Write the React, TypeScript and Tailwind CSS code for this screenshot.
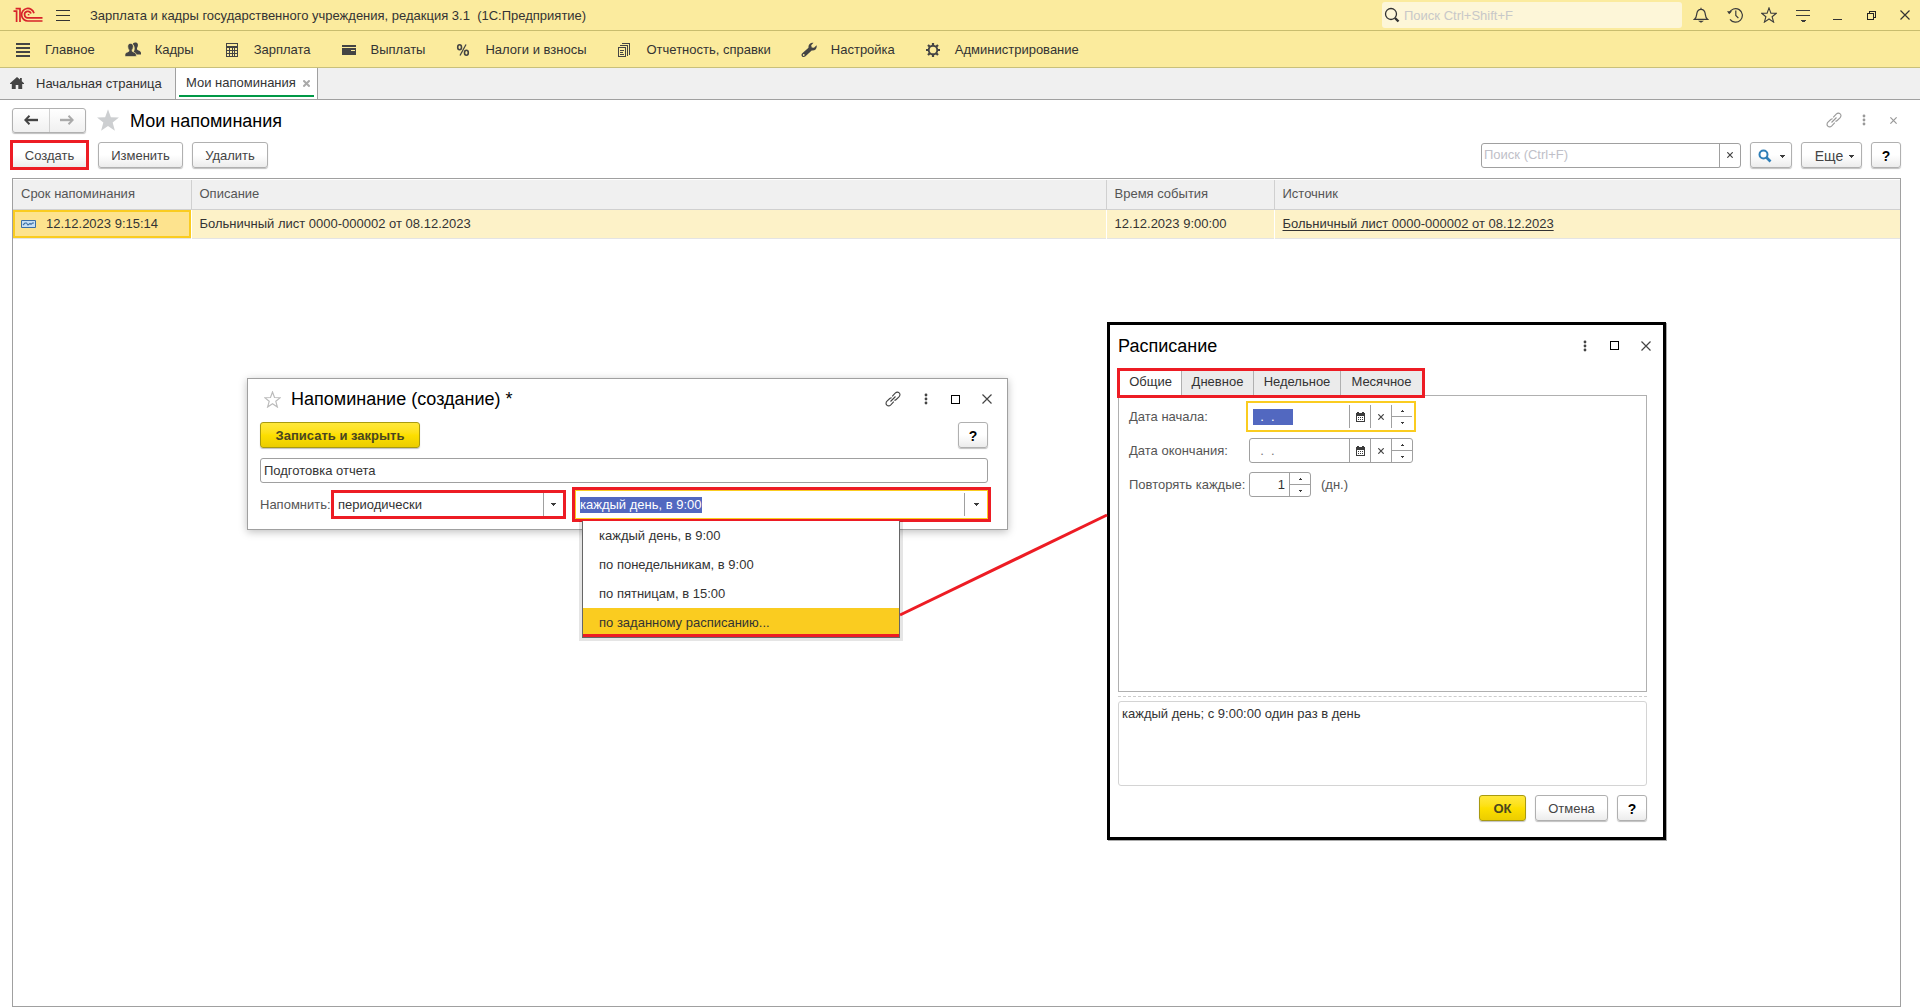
import { useState } from "react";
import type { ReactNode } from "react";
import clsx from "clsx";

const SECTIONS = [
  { label: "Главное", icon: <ListIcon /> },
  { label: "Кадры", icon: <PeopleIcon /> },
  { label: "Зарплата", icon: <CalcIcon /> },
  { label: "Выплаты", icon: <CardIcon /> },
  { label: "Налоги и взносы", icon: <PercentIcon /> },
  { label: "Отчетность, справки", icon: <DocsIcon /> },
  { label: "Настройка", icon: <WrenchIcon /> },
  { label: "Администрирование", icon: <GearIcon /> },
];

const PERIODS = ["каждый день, в 9:00", "по понедельникам, в 9:00", "по пятницам, в 15:00", "по заданному расписанию..."];

const SCHEDULE_TABS = [
  { label: "Общие", width: "w-[62px]" },
  { label: "Дневное", width: "w-[72px]" },
  { label: "Недельное", width: "w-[87px]" },
  { label: "Месячное", width: "w-[81px]" },
];

/* ---------- icons ---------- */

function Logo() {
  return (
    <svg width="30" height="16" viewBox="0 0 30 16" fill="none" stroke="#d8232a" strokeWidth="1.7">
      <path d="M0.5 4.2H3.6V15M2.6 1.6H7V15" />
      <path d="M21 6.2A6.3 6.3 0 1 0 15.2 14H29.5" />
      <path d="M18 6.6A3.3 3.3 0 1 0 15.2 10.9H29.5" />
      <path d="M14.8 7.7h1.6" strokeWidth="1.3" />
    </svg>
  );
}

function ListIcon() {
  return (
    <svg width="16" height="16" viewBox="0 0 16 16" fill="#444" shapeRendering="crispEdges">
      <path d="M1 1h14v2H1zM1 5h14v2H1zM1 9h14v2H1zM1 13h14v2H1z" />
    </svg>
  );
}

function PeopleIcon() {
  return (
    <svg width="16" height="16" viewBox="0 0 16 16" fill="#444">
      <path d="M8.2 1.2C9 .2 12 .1 12.7 1.7c.5 1.2.2 3-.7 4.300v1.500c1 1 4 1.300 4 3.500v1.500h-4.500c-.5-1.300-1.700-1.800-2.900-2.400C10 8 9.900 5 9 3.700 8.600 3 8 2.500 7.700 2.300z" />
      <path d="M2.800 4.500c0-2 1-3.100 2.700-3.100s2.800 1.100 2.800 3.100c0 1.500-.5 2.600-1.200 3.400v1.300c1.200 1 4.200 1.400 4.200 3.600v1.700H0v-1.700c0-2.200 2.800-2.600 4-3.600V7.900c-.7-.8-1.200-1.900-1.200-3.400z" stroke="#fbeb9d" strokeWidth=".6" />
    </svg>
  );
}

function CalcIcon() {
  return (
    <svg width="16" height="16" viewBox="0 0 16 16" fill="#444" fillRule="evenodd" shapeRendering="crispEdges">
      <path d="M2 1h12v14H2zM3 2v2h10V2zM3 6v2h2V6zM6 6v2h2V6zM9 6v2h1V6zM11 6v2h2V6zM3 9v2h2V9zM6 9v2h2V9zM9 9v2h1V9zM11 9v2h2V9zM3 12v2h2v-2zM6 12v2h2v-2zM9 12v2h1v-2zM11 12v2h2v-2z" />
    </svg>
  );
}

function CardIcon() {
  return (
    <svg width="16" height="16" viewBox="0 0 16 16" fill="#444" shapeRendering="crispEdges">
      <path d="M1 3h14v2H1zM1 6h14v7H1z" />
      <path d="M10 8h4v1h-4z" fill="#fbeb9d" />
    </svg>
  );
}

function PercentIcon() {
  return (
    <svg width="16" height="16" viewBox="0 0 16 16" fill="none" stroke="#444" strokeWidth="1.6">
      <ellipse cx="4.600" cy="5.300" rx="1.900" ry="2.500" />
      <ellipse cx="11.400" cy="10.700" rx="1.900" ry="2.500" />
      <path d="M11 2.500 5 13.500" strokeWidth="1.300" />
    </svg>
  );
}

function DocsIcon() {
  return (
    <svg width="16" height="16" viewBox="0 0 16 16" fill="none" stroke="#444" shapeRendering="crispEdges">
      <path d="M1.500 5.500h7v9h-7zM2.500 3.500h8v10M4.500 1.500h8v11" />
      <path d="M3 8.500h4M3 10.500h3M3 12.500h4" />
    </svg>
  );
}

function WrenchIcon() {
  return (
    <svg width="16" height="16" viewBox="0 0 16 16" fill="#444">
      <path d="M15.600 3.300c.7 3-1.600 5.700-4.900 5.100L4.500 14.300c-1 1-2.600 1-3.400.1-.9-.9-.8-2.300.2-3.200l6.200-5.400C7 2.700 9.500.2 12.500.8L10.200 3.200l.5 2.200 2.300.4zM2.700 12.100a.9.9 0 1 0 .1 1.800.9.9 0 0 0-.1-1.800z" />
    </svg>
  );
}

function GearIcon() {
  return (
    <svg width="16" height="16" viewBox="0 0 16 16" fill="none" stroke="#444">
      <circle cx="8" cy="8" r="4.300" strokeWidth="1.900" />
      <path d="M8 1v2.500M8 12.500V15M1 8h2.500M12.500 8H15M3 3l1.800 1.800M11.200 11.200 13 13M13 3l-1.800 1.800M4.800 11.200 3 13" strokeWidth="2.200" />
    </svg>
  );
}

function HomeIcon() {
  return (
    <svg width="14" height="14" viewBox="0 0 14 14" fill="#444">
      <path d="M7 0l3 2.600V1h1.800v3.200L14 6.200v.8h-1.800v5H8.300V8H5.700v4H1.800V7H0v-.8z" />
    </svg>
  );
}

function SearchIcon({ className, stroke }: { className?: string; stroke: number }) {
  return (
    <svg width="16" height="16" viewBox="0 0 16 16" fill="none" stroke="currentColor" strokeWidth={stroke} className={className}>
      <circle cx="7" cy="7" r="5.500" />
      <path d="M11 11 14.500 14.500" strokeWidth="2.400" />
    </svg>
  );
}

function FindIcon() {
  return (
    <svg width="14" height="14" viewBox="0 0 14 14" fill="none" stroke="#2f7fb8">
      <circle cx="5.500" cy="5.500" r="4" strokeWidth="2" />
      <path d="M8.500 8.500 12.500 12.500" strokeWidth="2.600" />
    </svg>
  );
}

function BellIcon() {
  return (
    <svg width="16" height="16" viewBox="0 0 16 16" fill="none" stroke="#3b3b3b" strokeWidth="1.200">
      <path d="M8 .8v1.500M1.500 12.300c2-1.500 2-3.500 2.300-5.700C4.200 3.800 5.700 2.300 8 2.300s3.800 1.500 4.200 4.300c.3 2.200.3 4.200 2.300 5.700z" />
      <path d="M5 13.800h6L8.500 15.500h-1z" fill="#3b3b3b" stroke="none" />
    </svg>
  );
}

function HistoryIcon() {
  return (
    <svg width="16" height="16" viewBox="0 0 16 16" fill="none" stroke="#3b3b3b" strokeWidth="1.200">
      <path d="M2.200 6A6.800 6.800 0 1 1 3 12.300M8.800 3.500V8.500l2.600 2.700" />
      <path d="M0 4.200h5L2.200 7.300z" fill="#3b3b3b" stroke="none" />
    </svg>
  );
}

function StarIcon({ className, size = 16 }: { className: string; size?: number }) {
  return (
    <svg width={size} height={size} viewBox="0 0 16 16" className={className} strokeWidth="1.100">
      <path d="M8 .9l1.900 5.200 5.400.2-4.200 3.400 1.500 5.400L8 12l-4.600 3.100 1.500-5.400L.7 6.300l5.400-.2z" />
    </svg>
  );
}

function SettingsIcon() {
  return (
    <svg width="16" height="16" viewBox="0 0 16 16" fill="#3b3b3b" shapeRendering="crispEdges">
      <path d="M1 3h14v1H1zM1 8h14v1H1zM6 13h5v1H6zM7 14h3v1H7z" />
    </svg>
  );
}

function LinkIcon() {
  return (
    <svg width="16" height="16" viewBox="0 0 16 16" fill="none" stroke="currentColor" strokeWidth="1.100">
      <path d="M7.200 5.400l3-3.200c1.200-1.200 2.900-1.300 4-.3s1 2.700-.2 3.900L11.200 8.500c-.6.6-1.200.8-1.900.8M8.800 10.600l-3 3.200c-1.200 1.200-2.900 1.300-4 .3s-1-2.700.2-3.900L4.800 7.500c.6-.6 1.200-.8 1.900-.8M5.500 10.500l5-5" />
    </svg>
  );
}

function DotsIcon() {
  return (
    <svg width="6" height="12" viewBox="0 0 6 12" fill="currentColor">
      <circle cx="3" cy="2" r="1.400" />
      <circle cx="3" cy="6" r="1.400" />
      <circle cx="3" cy="10" r="1.400" />
    </svg>
  );
}

function SquareIcon() {
  return <span className="block size-[9px] border border-black" />;
}

function CrossIcon({ size, stroke = 1.2 }: { size: number; stroke?: number }) {
  return (
    <svg width={size} height={size} viewBox="0 0 10 10" stroke="currentColor" strokeWidth={stroke}>
      <path d="M.5.5l9 9M9.500.5l-9 9" vectorEffect="non-scaling-stroke" />
    </svg>
  );
}

function Caret() {
  return (
    <svg width="5" height="3" viewBox="0 0 5 3" fill="#3b3b3b" shapeRendering="crispEdges">
      <path d="M0 0h5v1H0zM1 1h3v1H1zM2 2h1v1H2z" />
    </svg>
  );
}

function Arrow({ className }: { className: string }) {
  return (
    <svg width="14" height="10" viewBox="0 0 14 10" fill="none" stroke="currentColor" strokeWidth="2" className={className}>
      <path d="M14 5H2" strokeWidth="2.400" />
      <path d="M5.500.8 1.300 5l4.200 4.200" />
    </svg>
  );
}

function CalendarIcon() {
  return (
    <svg width="9" height="10" viewBox="0 0 9 10" fill="#3b3b3b" fillRule="evenodd" shapeRendering="crispEdges">
      <path d="M0 1h1V0h2v1h3V0h2v1h1v9H0zM1 4v5h7V4z" />
      <path d="M2 5h1v1H2zM4 5h1v1H4zM6 5h1v1H6zM2 7h1v1H2zM4 7h1v1H4zM6 7h1v1H6z" />
    </svg>
  );
}

/* ---------- controls ---------- */

type ButtonProps = { children: ReactNode; className?: string; primary?: boolean; label?: string };

function Button({ children, className, primary, label }: ButtonProps) {
  return (
    <button
      type="button"
      aria-label={label}
      className={clsx(
        "flex h-[26px] shrink-0 items-center justify-center rounded-[3px] border bg-linear-to-b pt-0.5 shadow-[0_1px_1px_rgba(0,0,0,0.25)]",
        primary
          ? "border-[#a89a10] from-[#ffe83a] via-[#fddf00] to-[#ebcd00] font-bold text-[#4a4620]"
          : "border-[#b0b0b0] from-white via-white to-[#ececec] text-[#444]",
        className
      )}
    >
      {children}
    </button>
  );
}

function HelpButton() {
  return (
    <Button className="w-[30px] text-sm font-bold text-black" label="Справка">
      ?
    </Button>
  );
}

function Spinner({ name }: { name: string }) {
  return (
    <span className="flex w-[21px] flex-col border-l border-[#a0a0a0]">
      <button type="button" aria-label={`${name}: больше`} className="flex flex-1 items-center justify-center border-b border-[#a0a0a0]">
        <svg width="3" height="2" viewBox="0 0 3 2" fill="#3b3b3b" shapeRendering="crispEdges">
          <path d="M1 0h1v1h1v1H0V1h1z" />
        </svg>
      </button>
      <button type="button" aria-label={`${name}: меньше`} className="flex flex-1 items-center justify-center">
        <svg width="3" height="2" viewBox="0 0 3 2" fill="#3b3b3b" shapeRendering="crispEdges">
          <path d="M0 0h3v1H2v1H1V1H0z" />
        </svg>
      </button>
    </span>
  );
}

function DateField({ id, name, focused }: { id: string; name: string; focused?: boolean }) {
  return (
    <div
      className={clsx(
        "flex bg-white",
        focused ? "-mx-[3px] h-[31px] border-2 border-[#facc20] px-0.5 py-0.5" : "h-[25px] rounded-[3px] border border-[#a0a0a0]"
      )}
    >
      <span className="flex w-[99px] items-center pl-[3px]">
        <input
          id={id}
          defaultValue="  .  ."
          className={clsx("h-4 w-10 whitespace-pre outline-none", focused ? "bg-[#5268c0] text-white" : "text-[#777]")}
        />
      </span>
      <button type="button" aria-label={`${name}: календарь`} className="flex w-[21px] items-center justify-center border-l border-[#a0a0a0]">
        <CalendarIcon />
      </button>
      <button type="button" aria-label={`${name}: очистить`} className="flex w-[21px] items-center justify-center border-l border-[#a0a0a0] text-[#444]">
        <CrossIcon size={6} />
      </button>
      <Spinner name={name} />
    </div>
  );
}

/* ---------- application frame ---------- */

function TitleBar() {
  return (
    <header className="flex h-[31px] items-center border-b border-[#c9bd6e] bg-[#fbeb9e] pr-[7px] pl-[13px]">
      <Logo />
      <button type="button" aria-label="Меню" className="ml-[13px]">
        <svg width="14" height="11" viewBox="0 0 14 11" fill="#333" shapeRendering="crispEdges">
          <path d="M0 0h14v1H0zM0 5h14v1H0zM0 10h14v1H0z" />
        </svg>
      </button>
      <h1 className="ml-5 pt-0.5 whitespace-pre">Зарплата и кадры государственного учреждения, редакция 3.1  (1С:Предприятие)</h1>
      <label className="ml-auto flex h-[26px] w-[300px] items-center gap-1 rounded-[3px] bg-[#fdf6d8] pl-0.5">
        <SearchIcon className="text-[#333]" stroke={1.3} />
        <input placeholder="Поиск Ctrl+Shift+F" aria-label="Поиск" className="min-w-0 flex-1 pt-0.5 outline-none placeholder:text-[#c8c8c8]" />
      </label>
      <div className="ml-[11px] flex gap-[18px] text-[#333]">
        <button type="button" aria-label="Уведомления"><BellIcon /></button>
        <button type="button" aria-label="История"><HistoryIcon /></button>
        <button type="button" aria-label="Избранное"><StarIcon className="fill-none stroke-[#3b3b3b]" /></button>
        <button type="button" aria-label="Настройки"><SettingsIcon /></button>
        <button type="button" aria-label="Свернуть" className="flex size-4 items-end justify-center pb-[3px]">
          <span className="h-px w-[9px] bg-[#333]" />
        </button>
        <button type="button" aria-label="Восстановить" className="flex size-4 items-center justify-center">
          <svg width="9" height="9" viewBox="0 0 9 9" fill="none" stroke="#222" shapeRendering="crispEdges">
            <path d="M.5 2.500h6v6h-6zM2.500 2V.5h6v6H7" />
          </svg>
        </button>
        <button type="button" aria-label="Закрыть" className="flex size-4 items-center justify-center"><CrossIcon size={10} /></button>
      </div>
    </header>
  );
}

function SectionBar() {
  return (
    <nav className="flex h-[37px] items-center gap-[30px] border-b border-[#c9c07a] bg-[#fbeb9d] pt-px pl-[15px]">
      {SECTIONS.map((s) => (
        <a key={s.label} href="#" className="flex items-center gap-3.5">
          {s.icon}
          {s.label}
        </a>
      ))}
    </nav>
  );
}

function PageTabs() {
  return (
    <div className="flex h-8 border-b border-[#a0a0a0] bg-[#f0f0f0]">
      <button type="button" className="flex w-[175px] items-center gap-3 pl-2.5">
        <HomeIcon />
        Начальная страница
      </button>
      <div className="flex w-[143px] flex-col border-x border-[#a0a0a0] bg-white px-[3px]">
        <div className="flex flex-1 items-center pt-[3px] pl-[7px]">
          <button type="button">Мои напоминания</button>
          <button type="button" aria-label="Закрыть вкладку" className="ml-[7px] text-[#aaa]">
            <CrossIcon size={7} stroke={2} />
          </button>
        </div>
        <div className="mb-0.5 h-0.5 bg-[#009846]" />
      </div>
    </div>
  );
}

function RemindersTable() {
  return (
    <div className="flex-1 border border-[#a0a0a0] py-px">
      <table className="w-full table-fixed border-collapse text-left">
        <colgroup>
          <col className="w-[178px]" />
          <col />
          <col className="w-[168px]" />
          <col className="w-[626px]" />
        </colgroup>
        <thead>
          <tr className="h-[29px] border-b border-[#d0d0d0] bg-[#f0f0f0] text-[#555]">
            <th className="border-r border-[#d0d0d0] pl-2 font-normal">Срок напоминания</th>
            <th className="border-r border-[#d0d0d0] pl-2 font-normal">Описание</th>
            <th className="border-r border-[#d0d0d0] pl-2 font-normal">Время события</th>
            <th className="pl-2 font-normal">Источник</th>
          </tr>
        </thead>
        <tbody>
          <tr className="h-[29px] border-b border-[#e4e4e4] bg-[#fdf2c8]">
            <td className="bg-[#fde38e] p-0">
              <div className="flex h-7 items-center gap-2.5 border-2 border-[#facc20] pl-1.5">
                <svg width="15" height="8" viewBox="0 0 15 8" fill="#c5def3" stroke="#3a6ea5">
                  <path d="M.5.5h14v7H.5z" />
                  <path d="M2 5l2-2h1.500L7 5l2-1.500 1 .8 1.500-1.300H13" fill="none" strokeWidth="1.100" />
                </svg>
                12.12.2023 9:15:14
              </div>
            </td>
            <td className="border-x border-white pl-2">Больничный лист 0000-000002 от 08.12.2023</td>
            <td className="border-x border-white pl-2">12.12.2023 9:00:00</td>
            <td className="pl-2">
              <a href="#" className="underline underline-offset-2">Больничный лист 0000-000002 от 08.12.2023</a>
            </td>
          </tr>
        </tbody>
      </table>
    </div>
  );
}

function RemindersPage() {
  return (
    <main className="flex flex-1 flex-col pr-[19px] pb-px pl-3">
      <div className="mt-2 flex h-6 items-center">
        <div className="flex h-[25px] w-[74px] rounded-[3px] border border-[#b0b0b0] bg-linear-to-b from-white to-[#f0f0f0] shadow-[0_1px_1px_rgba(0,0,0,0.25)]">
          <button type="button" aria-label="Назад" className="flex flex-1 items-center justify-center border-r border-[#d0d0d0]">
            <Arrow className="text-[#444]" />
          </button>
          <button type="button" aria-label="Вперед" className="flex flex-1 items-center justify-center">
            <Arrow className="rotate-180 text-[#aaa]" />
          </button>
        </div>
        <button type="button" aria-label="В избранное" className="ml-2.5">
          <StarIcon size={24} className="fill-[#cdcfd1]" />
        </button>
        <h2 className="ml-2.5 pt-px text-lg text-black">Мои напоминания</h2>
        <div className="mr-1 ml-auto flex items-center gap-[19px] text-[#999]">
          <button type="button" aria-label="Получить ссылку"><LinkIcon /></button>
          <button type="button" aria-label="Дополнительно"><DotsIcon /></button>
          <button type="button" aria-label="Закрыть форму" className="ml-1"><CrossIcon size={7} /></button>
        </div>
      </div>

      <div className="mt-2 mb-2 -ml-0.5 flex h-[30px] items-center gap-[9px]">
        <button type="button" className="h-[30px] w-[79px] border-3 border-[#ed1c24] bg-linear-to-b from-white via-white to-[#ececec] pt-0.5 text-[#444]">
          Создать
        </button>
        <Button className="w-[85px]">Изменить</Button>
        <Button className="w-[76px]">Удалить</Button>
        <div className="ml-auto flex h-[25px] w-[260px] rounded-[3px] border border-[#a0a0a0]">
          <input placeholder="Поиск (Ctrl+F)" aria-label="Поиск в списке" className="min-w-0 flex-1 pl-0.5 outline-none placeholder:text-[#c0c0c8]" />
          <button type="button" aria-label="Очистить" className="flex w-[21px] items-center justify-center border-l border-[#a0a0a0] text-[#444]">
            <CrossIcon size={6} />
          </button>
        </div>
        <Button className="w-[42px] gap-2" label="Найти">
          <FindIcon />
          <Caret />
        </Button>
        <Button className="w-[61px] gap-1.5 pl-1.5 text-sm">
          Еще <Caret />
        </Button>
        <HelpButton />
      </div>

      <RemindersTable />
    </main>
  );
}

/* ---------- floating windows ---------- */

function ReminderWindow() {
  const [period, setPeriod] = useState(PERIODS[0]);

  return (
    <section className="absolute top-[378px] left-[247px] h-[152px] w-[761px] border border-[#a0a0a0] bg-white px-3 pt-[5px] shadow-[0_2px_8px_rgba(0,0,0,0.25)]">
      <div className="flex h-[30px] items-center pl-1 text-[#444]">
        <button type="button" aria-label="В избранное">
          <StarIcon size={17} className="fill-none stroke-[#bbb]" />
        </button>
        <h2 className="ml-2.5 text-lg text-black">Напоминание (создание) *</h2>
        <div className="mr-[3px] ml-auto flex items-center gap-[22px]">
          <button type="button" aria-label="Получить ссылку"><LinkIcon /></button>
          <button type="button" aria-label="Дополнительно"><DotsIcon /></button>
          <button type="button" aria-label="Развернуть"><SquareIcon /></button>
          <button type="button" aria-label="Закрыть"><CrossIcon size={10} /></button>
        </div>
      </div>

      <div className="mt-2 flex justify-between pr-[7px] pb-2.5">
        <Button primary className="w-[160px]">Записать и закрыть</Button>
        <HelpButton />
      </div>

      <input
        aria-label="Текст напоминания"
        defaultValue="Подготовка отчета"
        className="block h-[25px] w-[728px] rounded-[3px] border border-[#a0a0a0] px-[3px] outline-none"
      />

      <div className="mt-1 flex h-[35px] items-center">
        <label htmlFor="mode" className="w-[71px] text-[#555]">Напомнить:</label>
        <div className="relative flex h-[29px] w-[235px] border-3 border-[#ed1c24]">
          <select id="mode" className="min-w-0 flex-1 appearance-none pl-1 outline-none">
            <option>периодически</option>
          </select>
          <span className="pointer-events-none absolute inset-y-0 right-0 flex w-5 items-center justify-center border-l border-[#a0a0a0]">
            <Caret />
          </span>
        </div>
        <div className="ml-1.5 h-[35px] w-[419px] border-3 border-[#ed1c24]">
          <div className="flex h-full border border-[#facc20] py-0.5">
            <div className="flex flex-1 items-center pl-1">
              <input
                role="combobox"
                aria-label="Периодичность"
                aria-expanded="true"
                aria-controls="periods"
                value={period}
                onChange={(e) => setPeriod(e.target.value)}
                className="field-sizing-content h-4 bg-[#5268c0] text-white outline-none"
              />
            </div>
            <button type="button" aria-label="Выбрать" className="flex w-[23px] items-center justify-center border-l border-[#a0a0a0]">
              <Caret />
            </button>
          </div>
        </div>
      </div>

      <ul
        id="periods"
        role="listbox"
        className="absolute top-[142px] left-[334px] w-[318px] border-x border-b border-[#666] bg-white shadow-[0_0_0_3px_rgba(0,0,0,0.1)] [clip-path:inset(0_-4px_-4px_-4px)]"
      >
        {PERIODS.map((p, i) => (
          <li
            key={p}
            role="option"
            aria-selected={i === 3}
            onClick={() => setPeriod(p)}
            className={clsx("flex h-[29px] items-center pl-4", i === 3 && "border-b-3 border-[#ed1c24] bg-[#facc20] pt-[3px]")}
          >
            {p}
          </li>
        ))}
      </ul>
    </section>
  );
}

function ScheduleWindow() {
  const [tab, setTab] = useState("Общие");

  return (
    <section className="absolute top-[322px] left-[1107px] flex h-[518px] w-[559px] flex-col border-3 border-black bg-white pr-4 pl-2 shadow-[1px_1px_0_#aaa]">
      <div className="flex h-[43px] items-center pb-0.5 text-[#444]">
        <h2 className="text-lg text-black">Расписание</h2>
        <div className="-mr-1 ml-auto flex items-center gap-[22px]">
          <button type="button" aria-label="Дополнительно"><DotsIcon /></button>
          <button type="button" aria-label="Развернуть"><SquareIcon /></button>
          <button type="button" aria-label="Закрыть"><CrossIcon size={10} /></button>
        </div>
      </div>

      <div role="tablist" className="relative z-10 -mb-[3px] -ml-px flex h-[30px] w-[308px] shrink-0 border-3 border-[#ed1c24]">
        {SCHEDULE_TABS.map((t) => (
          <button
            key={t.label}
            type="button"
            role="tab"
            aria-selected={tab === t.label}
            onClick={() => setTab(t.label)}
            className={clsx("border-r border-[#b0b0b0] pb-0.5 last:border-r-0", t.width, tab === t.label ? "bg-white" : "bg-[#ebebeb]")}
          >
            {t.label}
          </button>
        ))}
      </div>

      <div role="tabpanel" className="h-[297px] shrink-0 border border-[#b0b0b0] pt-[5px] pl-2.5 text-[#555]">
        <div className="grid w-max grid-cols-[120px_auto] items-center">
          <label htmlFor="start">Дата начала:</label>
          <div className="flex h-[31px] items-center"><DateField id="start" name="Дата начала" focused /></div>
          <label htmlFor="end">Дата окончания:</label>
          <div className="flex h-[37px] items-center"><DateField id="end" name="Дата окончания" /></div>
          <label htmlFor="every">Повторять каждые:</label>
          <div className="flex h-[31px] items-center gap-2.5">
            <div className="flex h-[25px] w-[62px] rounded-[3px] border border-[#a0a0a0]">
              <input id="every" defaultValue="1" className="min-w-0 flex-1 pr-1 text-right text-[#333] outline-none" />
              <Spinner name="Повторять каждые" />
            </div>
            (дн.)
          </div>
        </div>
      </div>

      <div className="mt-1 border-t border-dashed border-[#ccc]" />
      <textarea
        readOnly
        aria-label="Описание расписания"
        value="каждый день; с 9:00:00 один раз в день"
        className="mt-1 h-[85px] shrink-0 resize-none rounded-[3px] border border-[#d4d4d4] px-[3px] pt-1 outline-none"
      />
      <div className="mt-[9px] flex justify-end gap-[9px]">
        <Button primary className="w-[47px]">ОК</Button>
        <Button className="w-[73px]">Отмена</Button>
        <HelpButton />
      </div>
    </section>
  );
}

export default function App() {
  return (
    <div className="relative flex min-h-screen flex-col overflow-hidden bg-white font-['Liberation_Sans',Arial,sans-serif] text-[13px] leading-4 text-[#333]">
      <TitleBar />
      <SectionBar />
      <PageTabs />
      <RemindersPage />
      <ReminderWindow />
      <ScheduleWindow />
      {/* pointer from the chosen list item to the schedule window */}
      <svg width="209" height="104" viewBox="0 0 209 104" className="pointer-events-none absolute top-[513px] left-[899px]">
        <path d="M1 102 208 2" stroke="#ed1c24" strokeWidth="3" />
      </svg>
    </div>
  );
}
